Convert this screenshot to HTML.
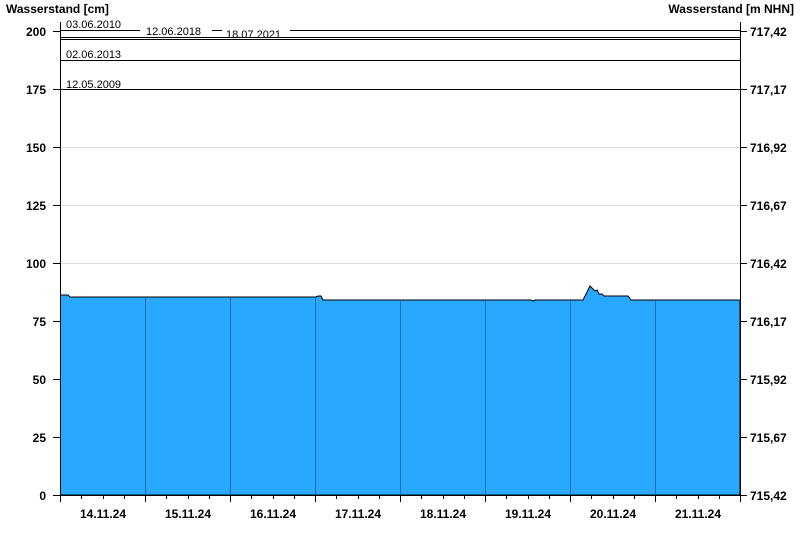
<!DOCTYPE html>
<html><head><meta charset="utf-8"><style>
html,body{margin:0;padding:0;background:#fff;}
svg{display:block;font-family:"Liberation Sans",Arial,sans-serif;}
.b{font-weight:bold;font-size:12px;fill:#000;}
.s{font-size:11px;fill:#000;}
</style></head><body>
<svg width="800" height="550" viewBox="0 0 800 550" xmlns="http://www.w3.org/2000/svg">
<text class="b" x="6" y="13">Wasserstand [cm]</text>
<text class="b" x="794" y="13" text-anchor="end">Wasserstand [m NHN]</text>
<g stroke="#ddd" stroke-width="1">
<line x1="60" y1="147.5" x2="740" y2="147.5"/>
<line x1="60" y1="205.5" x2="740" y2="205.5"/>
<line x1="60" y1="263.5" x2="740" y2="263.5"/>
<line x1="60" y1="89.5" x2="740" y2="89.5"/>
</g>
<path d="M60.5,295 L68,295 L70,297 L316,297 L318,296 L321,296 L323,300 L531,300 L533,301 L535,300 L583,300 L587,292 L590,286 L593,289 L595,291 L597,290 L599,294 L602,294 L604,296 L628,296 L631,300 L740,300 L740,495 L60.5,495 Z" fill="#29a8ff" stroke="#000" stroke-width="1"/>
<g stroke="#1e6da8" stroke-width="1">
<line x1="145.5" y1="298" x2="145.5" y2="495"/><line x1="230.5" y1="298" x2="230.5" y2="495"/>
<line x1="315.5" y1="298" x2="315.5" y2="495"/><line x1="400.5" y1="301" x2="400.5" y2="495"/>
<line x1="485.5" y1="301" x2="485.5" y2="495"/><line x1="570.5" y1="301" x2="570.5" y2="495"/>
<line x1="655.5" y1="301" x2="655.5" y2="495"/>
</g>
<g stroke="#000" stroke-width="1" fill="none">
<line x1="60" y1="30.5" x2="140" y2="30.5"/><line x1="212" y1="30.5" x2="222" y2="30.5"/><line x1="290" y1="30.5" x2="740" y2="30.5"/>
<line x1="60" y1="37.5" x2="740" y2="37.5"/><line x1="60" y1="39.5" x2="740" y2="39.5"/>
<line x1="60" y1="60.5" x2="740" y2="60.5"/><line x1="60" y1="89.5" x2="740" y2="89.5"/>
<line x1="60.5" y1="22" x2="60.5" y2="495"/><line x1="740.5" y1="22" x2="740.5" y2="495"/>
<line x1="53" y1="495.5" x2="740" y2="495.5"/>
<path d="M53 31.5H60M53 89.5H60M53 147.5H60M53 205.5H60M53 263.5H60M53 321.5H60M53 379.5H60M53 437.5H60"/>
<path d="M740 31.5H747M740 89.5H747M740 147.5H747M740 205.5H747M740 263.5H747M740 321.5H747M740 379.5H747M740 437.5H747M740 495.5H747"/>
<path d="M60.5 495V502M145.5 495V502M230.5 495V502M315.5 495V502M400.5 495V502M485.5 495V502M570.5 495V502M655.5 495V502M740.5 495V502"/>
<path d="M81.5 495V499M103.5 495V499M124.5 495V499M166.5 495V499M188.5 495V499M209.5 495V499M251.5 495V499M273.5 495V499M294.5 495V499M336.5 495V499M358.5 495V499M379.5 495V499M421.5 495V499M443.5 495V499M464.5 495V499M506.5 495V499M528.5 495V499M549.5 495V499M591.5 495V499M613.5 495V499M634.5 495V499M676.5 495V499M698.5 495V499M719.5 495V499"/>
</g>
<g fill="#fff"><rect x="142" y="26" width="68" height="10"/><rect x="224" y="28" width="64" height="9"/></g>
<g class="s">
<text x="66" y="28">03.06.2010</text><text x="146" y="35">12.06.2018</text><text x="226" y="38">18.07.2021</text>
<text x="66" y="58">02.06.2013</text><text x="66" y="88">12.05.2009</text>
</g>
<g class="b" text-anchor="end">
<text x="46" y="36">200</text><text x="46" y="94">175</text><text x="46" y="152">150</text><text x="46" y="210">125</text>
<text x="46" y="268">100</text><text x="46" y="326">75</text><text x="46" y="384">50</text><text x="46" y="442">25</text><text x="46" y="500">0</text>
</g>
<g class="b">
<text x="750" y="36">717,42</text><text x="750" y="94">717,17</text><text x="750" y="152">716,92</text><text x="750" y="210">716,67</text>
<text x="750" y="268">716,42</text><text x="750" y="326">716,17</text><text x="750" y="384">715,92</text><text x="750" y="442">715,67</text><text x="750" y="500">715,42</text>
</g>
<g class="b" text-anchor="middle">
<text x="103" y="518">14.11.24</text><text x="188" y="518">15.11.24</text><text x="273" y="518">16.11.24</text><text x="358" y="518">17.11.24</text>
<text x="443" y="518">18.11.24</text><text x="528" y="518">19.11.24</text><text x="613" y="518">20.11.24</text><text x="698" y="518">21.11.24</text>
</g>
</svg>
</body></html>
